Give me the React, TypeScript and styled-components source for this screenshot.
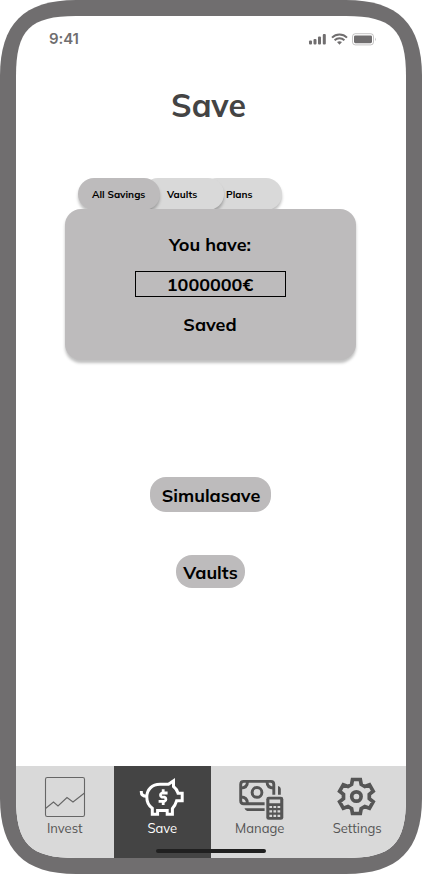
import React from "react";
import styled, { createGlobalStyle } from "styled-components";

const GlobalStyle = createGlobalStyle`
  * { box-sizing: border-box; }
  body { margin: 0; background: #fff; font-family: Mulish, Muli, Lato, sans-serif; }
`;

const Bezel = styled.div`
  width: 422px;
  height: 874px;
  padding: 16px;
  background: #706e6f;
  clip-path: path("M0 76C0 24 24 0 76 0H346C398 0 422 24 422 76V798C422 850 398 874 346 874H76C24 874 0 850 0 798Z");
`;

const Screen = styled.main`
  width: 390px;
  height: 842px;
  background: #fff;
  display: flex;
  flex-direction: column;
  align-items: center;
  clip-path: path("M0 60C0 14 14 0 60 0H330C376 0 390 14 390 60V782C390 828 376 842 330 842H60C14 842 0 828 0 782Z");
`;

const StatusBar = styled.header`
  width: 100%;
  height: 46px;
  padding: 0 30px 0 33px;
  display: flex;
  align-items: center;
  justify-content: space-between;
  color: #706e6f;
`;

const Clock = styled.span`
  font: 600 15px/18px Inter, sans-serif;
  letter-spacing: -0.1px;
`;

const Title = styled.h1`
  margin: 22px 0 0;
  padding-right: 5px;
  font-size: 32px;
  line-height: 42px;
  font-weight: 700;
  color: #444;
`;

const Savings = styled.section`
  width: 291px;
  margin: 52px 1px 0 0;
`;

const Tabs = styled.div`
  display: flex;
  height: 31px;
  padding-left: 13px;
`;

const Tab = styled.button<{ $width: number; $layer: number; $overlap?: number; $inset: number; $active?: boolean }>`
  position: relative;
  z-index: ${(p) => p.$layer};
  flex: none;
  width: ${(p) => p.$width}px;
  height: 32px;
  margin: 0 0 0 -${(p) => p.$overlap ?? 0}px;
  padding: 1px 0 0 ${(p) => p.$inset}px;
  border: 0;
  border-radius: 16px;
  background: ${(p) => (p.$active ? "#bdbbbc" : "#d9d9d9")};
  box-shadow: 0 3px 3px rgba(0, 0, 0, 0.25);
  font: 700 10px/12px Mulish, Muli, Lato, sans-serif;
  white-space: nowrap;
  text-align: left;
  color: #000;
`;

const Card = styled.div`
  position: relative;
  z-index: 4;
  height: 151px;
  padding: 25px 1px 0 0;
  display: flex;
  flex-direction: column;
  align-items: center;
  border-radius: 16px;
  background: #bdbbbc;
  box-shadow: 0 3px 3px rgba(0, 0, 0, 0.25);
`;

const Line = styled.p`
  margin: 0;
  font-size: 18px;
  line-height: 22px;
  font-weight: 700;
  color: #000;
`;

const Amount = styled.div`
  width: 151px;
  height: 26px;
  margin: 15px -1px 17px 0;
  padding: 2px 1px 0 0;
  border: 1px solid #000;
  text-align: center;
`;

const Actions = styled.section`
  margin: 117px 1px 0 0;
  display: flex;
  flex-direction: column;
  align-items: center;
  gap: 43px;
`;

const Action = styled.button<{ $width: number; $height: number; $nudge?: number }>`
  width: ${(p) => p.$width}px;
  height: ${(p) => p.$height}px;
  padding: 2px 0 0 ${(p) => p.$nudge ?? 0}px;
  border: 0;
  border-radius: 16px;
  background: #bdbbbc;
  color: #000;
  font: 700 18px/22px Mulish, Muli, Lato, sans-serif;
`;

const Nav = styled.nav`
  position: relative;
  width: 100%;
  height: 92px;
  margin-top: auto;
  display: grid;
  grid-template-columns: repeat(4, 1fr);
  background: #d9d9d9;
`;

const NavItem = styled.a<{ $active?: boolean }>`
  display: flex;
  flex-direction: column;
  align-items: center;
  padding-top: 8px;
  background: ${(p) => (p.$active ? "#444" : "transparent")};
  color: ${(p) => (p.$active ? "#fff" : "#555")};
  font-size: 13px;
  font-weight: 400;
  line-height: 16px;
  svg { display: block; overflow: visible; }
`;

const HomeIndicator = styled.div`
  position: absolute;
  left: 140px;
  bottom: 5px;
  width: 110px;
  height: 4px;
  border-radius: 2px;
  background: #202020;
`;

const StatusIcons = () => (
  <svg width="68" height="14" viewBox="0 0 68 14" fill="currentColor">
    <rect x="1" y="8.5" width="3" height="4" rx="1" />
    <rect x="5.5" y="7" width="3" height="5.5" rx="1" />
    <rect x="10" y="4.5" width="3" height="8" rx="1" />
    <rect x="14.8" y="2" width="3" height="10.5" rx="1" />
    <g fill="none" stroke="currentColor" strokeWidth="2">
      <path d="M24 5.6C28.2 1.5 34.8 1.5 39 5.6" />
      <path d="M26.6 8.2C29.4 5.6 33.6 5.6 36.4 8.2" />
    </g>
    <path d="M29 10.1Q31.5 8.3 34 10.1L31.5 12.7Z" />
    <rect x="44.5" y="1.7" width="21" height="11.2" rx="2.8" fill="none" stroke="currentColor" opacity=".4" />
    <rect x="46" y="3.4" width="18" height="7.8" rx="1.4" />
    <path d="M67 5.4Q68.3 7.2 67 9Z" opacity=".5" />
  </svg>
);

const ChartIcon = () => (
  <svg width="46" height="46" viewBox="0 0 46 46" fill="none" stroke="#666" strokeWidth="1.1">
    <rect x="3.5" y="3.5" width="39" height="39" rx="1.8" />
    <path d="M3.5 34.5L11.5 28L16 32L25 23.5L31 28L42.5 19" />
  </svg>
);

const PiggyIcon = () => (
  <svg width="46" height="46" viewBox="0 0 46 46" fill="none" stroke="currentColor" strokeWidth="3">
    <path d="M2.3 17V18C2.3 21 4 22.3 7.8 22.3" />
    <path d="M34.5 12.5V6.8L29.5 10.3H21C13 10.3 7.8 15.6 7.8 23C7.8 28 10 32 13.3 34.2V40.2H18.6V36.6H28.2V40.2H33.4V34.5Q36.4 31 37.6 26.8H43.2V19.2H39Q37.8 15 34.5 12.5Z" />
    <path d="M28.6 19H23A2.2 2.2 0 0 0 23 23.2H25.4A2.2 2.2 0 0 1 25.4 27.4H19.6M24.2 15.2V19M24.2 27.4V31" strokeWidth="2.8" />
  </svg>
);

const MoneyIcon = () => (
  <svg width="46" height="46" viewBox="0 0 46 46" fill="none" stroke="currentColor" strokeWidth="2.9">
    <path d="M27.6 29.7H6.7Q3.7 29.7 3.7 26.7V10.4Q3.7 7.4 6.7 7.4H33.8Q36.8 7.4 36.8 10.4V20.8" />
    <path d="M10.5 7.4Q10.5 14 3.7 14M30 7.4Q30 14 36.8 14M10.5 29.7Q10.5 23 3.7 23" />
    <circle cx="20" cy="18.4" r="4.9" />
    <path d="M41 12Q43.8 12.8 43.8 15.5V20.8H41Z" fill="currentColor" stroke="none" />
    <path d="M7.5 34.2H27.6V37H11.5Q8.5 37 7.5 34.2Z" fill="currentColor" stroke="none" />
    <rect x="29.3" y="22.8" width="17" height="23" rx="2.4" fill="currentColor" stroke="none" />
    <path d="M32.4 27.4H43.2" stroke="#d9d9d9" strokeWidth="3.6" />
    <path d="M32.4 33H43.2M32.4 37.4H43.2M32.4 41.8H43.2" stroke="#d9d9d9" strokeWidth="2.2" strokeDasharray="2.7 1.35" />
  </svg>
);

const GearIcon = () => (
  <svg width="46" height="46" viewBox="0 0 46 46" fill="none" stroke="currentColor" strokeWidth="3.7">
    <g transform="translate(22.4 22.5)">
      <path d="M-3.9 -17H3.9L4.8 -12.1L8.4 -10L13.1 -11.8L16.8 -5.2L12.9 -2.1V2.1L16.8 5.2L13.1 11.8L8.4 10L4.8 12.1L3.9 17H-3.9L-4.8 12.1L-8.4 10L-13.1 11.8L-16.8 5.2L-12.9 2.1V-2.1L-16.8 -5.2L-13.1 -11.8L-8.4 -10L-4.8 -12.1Z" />
      <circle r="4.7" />
    </g>
  </svg>
);

export default function App() {
  return (
    <>
      <GlobalStyle />
      <Bezel>
        <Screen>
          <StatusBar>
            <Clock>9:41</Clock>
            <StatusIcons />
          </StatusBar>
          <Title>Save</Title>
          <Savings>
            <Tabs>
              <Tab $width={82} $layer={3} $inset={14} $active>All Savings</Tab>
              <Tab $width={82} $layer={2} $overlap={18} $inset={25}>Vaults</Tab>
              <Tab $width={81} $layer={1} $overlap={23} $inset={25}>Plans</Tab>
            </Tabs>
            <Card>
              <Line>You have:</Line>
              <Amount><Line>1000000€</Line></Amount>
              <Line>Saved</Line>
            </Card>
          </Savings>
          <Actions>
            <Action $width={121} $height={35} $nudge={1}>Simulasave</Action>
            <Action $width={69} $height={33}>Vaults</Action>
          </Actions>
          <Nav>
            <NavItem><ChartIcon />Invest</NavItem>
            <NavItem $active><PiggyIcon />Save</NavItem>
            <NavItem><MoneyIcon />Manage</NavItem>
            <NavItem><GearIcon />Settings</NavItem>
            <HomeIndicator />
          </Nav>
        </Screen>
      </Bezel>
    </>
  );
}
